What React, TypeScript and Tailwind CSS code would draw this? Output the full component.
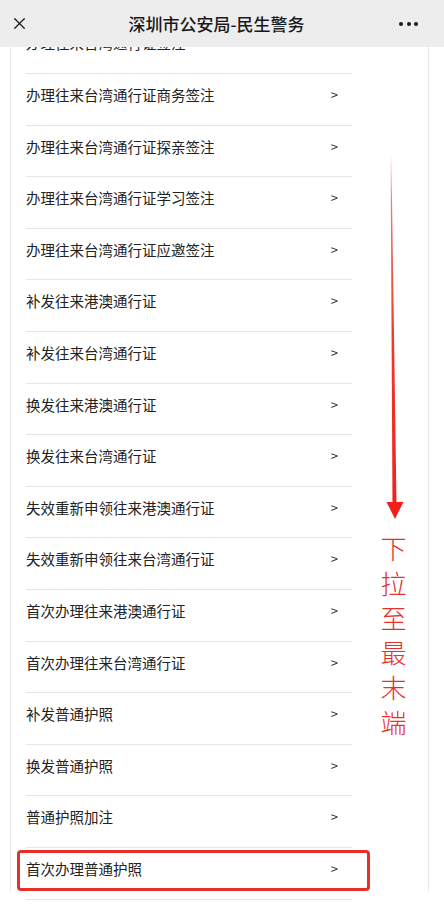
import { X } from 'lucide-react';

const items = [
  '办理往来台湾通行证签注',
  '办理往来台湾通行证商务签注',
  '办理往来台湾通行证探亲签注',
  '办理往来台湾通行证学习签注',
  '办理往来台湾通行证应邀签注',
  '补发往来港澳通行证',
  '补发往来台湾通行证',
  '换发往来港澳通行证',
  '换发往来台湾通行证',
  '失效重新申领往来港澳通行证',
  '失效重新申领往来台湾通行证',
  '首次办理往来港澳通行证',
  '首次办理往来台湾通行证',
  '补发普通护照',
  '换发普通护照',
  '普通护照加注',
  '首次办理普通护照',
];

const font = { fontFamily: '"Noto Sans CJK SC", "Noto Sans", sans-serif' };

export default function App() {
  return (
    <div className="relative w-[444px] h-[917px] bg-white overflow-hidden" style={font}>
      {/* title bar */}
      <header className="h-[47px] bg-[#ededed] flex items-center">
        <div className="w-[36px] flex justify-center pl-[2px]">
          <X className="w-[19px] h-[19px] text-[#191919]" strokeWidth={1.6} />
        </div>
        <div className="flex-1 text-center text-[17px] font-medium text-[#191919] leading-none pb-[1px]">
          深圳市公安局-民生警务
        </div>
        <div className="w-[47px] flex items-center gap-[3.5px] pl-[2px]">
          <span className="w-[4px] h-[4px] rounded-full bg-[#191919]" />
          <span className="w-[4px] h-[4px] rounded-full bg-[#191919]" />
          <span className="w-[4px] h-[4px] rounded-full bg-[#191919]" />
        </div>
      </header>

      {/* scrolled list */}
      <div className="h-[870px] overflow-hidden">
        <div className="ml-[10px] mr-[15px] h-full border-x border-[#e8e8e8] pl-[15px]">
          <div className="w-[326px] -mt-[25.6px]">
            {items.map((t, i) => (
              <div
                key={i}
                className="relative border-t border-[#e6e6e6] pt-[10px] pb-[19.6px] pr-[14px] flex items-center justify-between"
              >
                <span className="text-[14.5px] leading-[21px] text-[#222]">{t}</span>
                <span className="text-[13px] leading-[21px] text-[#333]">&gt;</span>
                {i === items.length - 1 && (
                  <div className="absolute left-[-9px] top-[2px] w-[353px] h-[41px] border-[3px] border-[#e8302a] rounded-[4px]" />
                )}
              </div>
            ))}
            <div className="border-t border-[#e6e6e6] h-[20px]" />
          </div>
        </div>
      </div>

      {/* annotation arrow */}
      <svg className="absolute left-[380px] top-[150px]" width="30" height="375" viewBox="380 150 30 375">
        <defs>
          <linearGradient id="fade" x1="0" y1="150" x2="0" y2="520" gradientUnits="userSpaceOnUse">
            <stop offset="0" stopColor="#f0261c" stopOpacity="0" />
            <stop offset="0.15" stopColor="#e4584f" stopOpacity="0.8" />
            <stop offset="0.5" stopColor="#ec3a30" />
            <stop offset="1" stopColor="#f2201a" />
          </linearGradient>
        </defs>
        <polygon points="390.6,157 391.4,157 396.5,504 392.5,504" fill="url(#fade)" />
        <polygon points="386.5,502 403.5,502 395,519" fill="#f2201a" />
      </svg>

      {/* annotation text */}
      <div className="absolute left-[380px] top-[531px] w-[27px] flex flex-col items-center text-[26px] leading-[34.8px] text-[#e8302a] font-light">
        {'下拉至最末端'.split('').map((c, i) => (
          <span key={i}>{c}</span>
        ))}
      </div>
    </div>
  );
}
